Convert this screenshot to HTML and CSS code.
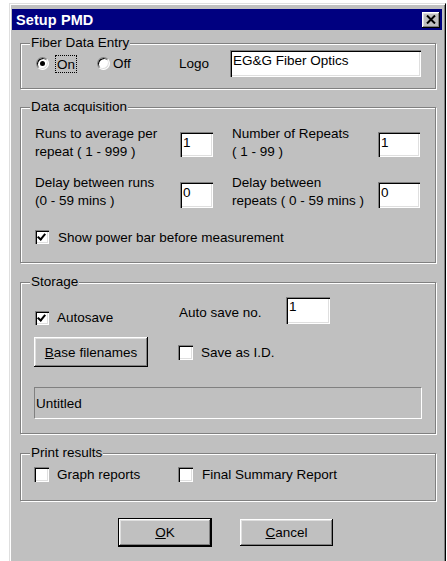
FILE: index.html
```html
<!DOCTYPE html>
<html lang="en">
<head>
<meta charset="utf-8">
<title>Setup PMD</title>
<link rel="stylesheet" href="styles.css">
</head>
<body>
<div class="window">
  <div class="titlebar">
    <span class="title">Setup PMD</span>
    <span class="close-btn">
      <svg width="10" height="9" viewBox="0 0 10 9"><path d="M1 0.5 L9 8.5 M9 0.5 L1 8.5" stroke="#000" stroke-width="2" fill="none"/></svg>
    </span>
  </div>
  <div class="client">

    <fieldset class="group group-fiber">
      <legend>Fiber Data Entry</legend>
      <div class="fiber-row">
        <label class="opt opt-on"><span class="radio checked"></span><span class="focus">On</span></label>
        <label class="opt opt-off"><span class="radio"></span><span>Off</span></label>
        <span class="logo-label">Logo</span>
        <div class="field logo-field">EG&amp;G Fiber Optics</div>
      </div>
    </fieldset>

    <fieldset class="group group-acq">
      <legend>Data acquisition</legend>
      <div class="acq-grid">
        <div class="acq-label">Runs to average per<br>repeat ( 1 - 999 )</div>
        <div class="field num-field">1</div>
        <div class="acq-label col2">Number of Repeats<br>( 1 - 99 )</div>
        <div class="field num-field wide">1</div>

        <div class="acq-label">Delay between runs<br>(0 - 59 mins )</div>
        <div class="field num-field tall">0</div>
        <div class="acq-label col2">Delay between<br>repeats ( 0 - 59 mins )</div>
        <div class="field num-field wide tall">0</div>
      </div>
      <label class="check-opt power-row"><span class="checkbox checked"></span><span>Show power bar before measurement</span></label>
    </fieldset>

    <fieldset class="group group-storage">
      <legend>Storage</legend>
      <div class="storage-row">
        <label class="check-opt autosave"><span class="checkbox checked"></span><span>Autosave</span></label>
        <span class="autono-label">Auto save no.</span>
        <div class="field autono-field">1</div>
      </div>
      <div class="storage-row row-b">
        <button class="btn base-btn" type="button"><u>B</u>ase filenames</button>
        <label class="check-opt saveid"><span class="checkbox"></span><span>Save as I.D.</span></label>
      </div>
      <div class="static-field">Untitled</div>
    </fieldset>

    <fieldset class="group group-print">
      <legend>Print results</legend>
      <div class="print-row">
        <label class="check-opt graph"><span class="checkbox"></span><span>Graph reports</span></label>
        <label class="check-opt summary"><span class="checkbox"></span><span>Final Summary Report</span></label>
      </div>
    </fieldset>

    <div class="buttons">
      <span class="default-ring"><button class="btn dlg-btn" type="button"><u>O</u>K</button></span>
      <button class="btn dlg-btn cancel" type="button"><u>C</u>ancel</button>
    </div>
  </div>
</div>
</body>
</html>
```

FILE: styles.css
```css
html, body {
  margin: 0;
  background: #fff;
}

body {
  font-family: "Liberation Sans", Arial, sans-serif;
  font-size: 13.5px;
  color: #000;
  overflow: hidden;
}

/* dialog frame */
.window {
  margin: 3px 0 0 9px;
  width: 437px;
  height: 566px;
  box-sizing: border-box;
  background: #c0c0c0;
  border-top: 1px solid #dfdfdf;
  border-left: 1px solid #dfdfdf;
  border-right: 1px solid #000;
  border-bottom: 1px solid #000;
  box-shadow: inset 1px 1px #fff, inset -1px -1px #808080;
  padding: 5px 3px 0 2px;
}

.titlebar {
  height: 21px;
  background: #000080;
  color: #fff;
  display: flex;
  align-items: center;
  justify-content: space-between;
  padding: 0 2px 0 4px;
}

.title {
  font-weight: bold;
  font-size: 14.5px;
  letter-spacing: 0.1px;
}

.close-btn {
  width: 18px;
  height: 16px;
  box-sizing: border-box;
  background: #c0c0c0;
  display: flex;
  align-items: center;
  justify-content: center;
  box-shadow: inset -1px -1px #000, inset 1px 1px #fff, inset -2px -2px #808080, inset 2px 2px #dfdfdf;
}

.client {
  padding: 0 6px 0 8px;
}

/* etched group boxes */
.group {
  margin: 0;
  padding: 0;
  border: 1px solid #808080;
  box-shadow: inset 1px 1px #fff, 1px 1px #fff;
  width: 416px;
  box-sizing: border-box;
  min-inline-size: 0;
}

.group legend {
  margin-left: 9px;
  padding: 0 1px;
  line-height: 14px;
  background: #c0c0c0;
}

.group-fiber { margin-top: 6px; }
.group-acq { margin-top: 11px; }
.group-storage { margin-top: 12px; }
.group-print { margin-top: 12px; }

/* sunken edit fields */
.field {
  background: #fff;
  box-sizing: border-box;
  box-shadow: inset 1px 1px #808080, inset 2px 2px #000, inset -1px -1px #fff, inset -2px -2px #dfdfdf;
  padding: 3px 3px 0 3px;
  line-height: 16px;
  white-space: nowrap;
  overflow: hidden;
}

/* fiber data row */
.fiber-row {
  display: flex;
  align-items: center;
  padding: 0 0 11px 15px;
}

.opt {
  display: flex;
  align-items: center;
}

.opt-on { width: 61px; }
.opt-off { width: 82px; }

.radio {
  width: 13px;
  height: 13px;
  box-sizing: border-box;
  border-radius: 50%;
  background: #fff;
  border: 1px solid;
  border-color: #808080 #fff #fff #808080;
  box-shadow: inset 1px 1px #000, inset -1px -1px #dfdfdf;
  display: flex;
  align-items: center;
  justify-content: center;
  flex: none;
}

.radio.checked::after {
  content: "";
  width: 5px;
  height: 5px;
  border-radius: 50%;
  background: #000;
}

.opt-on .radio { margin-right: 7px; }
.opt-off .radio { margin-right: 3px; }

.focus {
  outline: 1px dotted #000;
  outline-offset: 0;
  padding: 1px 1px 0;
  line-height: 15px;
}

.logo-label { width: 51px; }

.logo-field {
  width: 191px;
  height: 27px;
}

/* data acquisition grid */
.acq-grid {
  display: grid;
  grid-template-columns: 145px 33px 19px 146px 42px;
  row-gap: 13px;
  padding: 11px 0 0 14px;
  align-items: start;
}

.acq-label {
  line-height: 18px;
  white-space: nowrap;
}

.acq-label.col2 { grid-column: 4; }

.num-field {
  height: 25px;
  margin-top: 7px;
}

.num-field.tall {
  height: 26px;
  margin-top: 8px;
}

/* check boxes */
.check-opt {
  display: flex;
  align-items: center;
}

.checkbox {
  width: 14px;
  height: 14px;
  box-sizing: border-box;
  flex: none;
  background: #fff;
  box-shadow: inset 1px 1px #808080, inset 2px 2px #000, inset -1px -1px #fff, inset -2px -2px #dfdfdf;
  position: relative;
}

.checkbox.checked::after {
  content: "";
  position: absolute;
  left: 4px;
  top: 2px;
  width: 3px;
  height: 6px;
  border: solid #000;
  border-width: 0 2px 2px 0;
  transform: rotate(40deg);
}

.power-row {
  margin: 18px 0 16px 14px;
  height: 18px;
}

.power-row .checkbox { margin-right: 9px; }

/* storage */
.storage-row {
  display: flex;
  height: 28px;
  padding-left: 14px;
  margin-top: 8px;
}

.autosave {
  width: 144px;
  align-self: flex-end;
}

.autosave .checkbox { margin-right: 8px; }

.autono-label {
  width: 107px;
  align-self: center;
  margin-top: 3px;
}

.autono-field {
  width: 44px;
  height: 27px;
  padding-top: 2px;
}

.storage-row.row-b {
  height: 30px;
  margin-top: 12px;
  padding-left: 13px;
}

.btn {
  font: inherit;
  color: #000;
  background: #c0c0c0;
  border: none;
  margin: 0;
  padding: 0;
  box-sizing: border-box;
  box-shadow: inset -1px -1px #000, inset 1px 1px #fff, inset -2px -2px #808080, inset 2px 2px #dfdfdf;
}

.base-btn {
  width: 114px;
  height: 30px;
}

.saveid {
  margin-left: 30px;
}

.saveid .checkbox,
.print-row .checkbox {
  width: 15px;
  height: 15px;
  margin-right: 8px;
}

.static-field {
  margin: 20px 0 14px 13px;
  width: 388px;
  height: 32px;
  box-sizing: border-box;
  border: 1px solid;
  border-color: #808080 #fff #fff #808080;
  display: flex;
  align-items: center;
  padding-left: 1px;
}

/* print results */
.print-row {
  display: flex;
  padding: 6px 0 17px 13px;
  height: 17px;
}

.graph { width: 144px; }

.summary .checkbox { margin-right: 9px; }

/* dialog buttons */
.buttons {
  display: flex;
  align-items: center;
  padding-left: 98px;
  margin-top: 17px;
}

.default-ring {
  display: block;
  border: 1px solid #000;
}

.dlg-btn {
  display: block;
  width: 92px;
  height: 27px;
}

.dlg-btn.cancel {
  width: 93px;
  margin-left: 28px;
}
```
